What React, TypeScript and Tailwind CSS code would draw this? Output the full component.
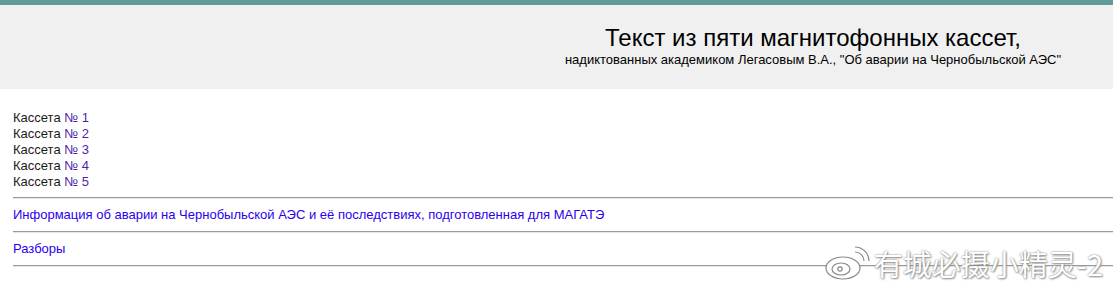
const CASSETTES = [1, 2, 3, 4, 5]

function Rule() {
  return <div className="h-[2px] border-t border-t-[#9a9a9a] border-b border-b-[#e6e6e6]" />
}

export default function App() {
  return (
    <div className="relative h-[289px] overflow-hidden bg-white font-['Liberation_Sans',Arial,sans-serif] text-[13px] leading-4 text-[#1a1a1a]">
      <div className="h-[5px] bg-[#5f9b9a]" />
      {/* Header */}
      <div className="flex h-[84px] justify-end bg-[#f0f0f0]">
        <div className="w-[600px] pt-[19px] text-center">
          <h1 className="text-[24px] leading-7 text-black">Текст из пяти магнитофонных кассет,</h1>
          <p className="text-[13px] leading-4 text-black">
            надиктованных академиком Легасовым В.А., "Об аварии на Чернобыльской АЭС"
          </p>
        </div>
      </div>

      <div className="pl-[13px] pt-[21px]">
        <ul>
          {CASSETTES.map((n) => (
            <li key={n}>
              Кассета <a href="#" className="text-[#4f1fa6]">№ {n}</a>
            </li>
          ))}
        </ul>
        <div className="mt-[7px]">
          <Rule />
        </div>
        <div className="py-[8px]">
          <a href="#" className="text-[#2a00f0]">
            Информация об аварии на Чернобыльской АЭС и её последствиях, подготовленная для МАГАТЭ
          </a>
        </div>
        <Rule />
        <div className="py-[8px]">
          <a href="#" className="text-[#2a00f0]">Разборы</a>
        </div>
        <Rule />
      </div>

      {/* watermark */}
      <div className="absolute right-[10px] top-[245px] flex items-center gap-[4px] text-[29px] leading-8 text-white [text-shadow:0_0_2px_#777,1px_1px_2px_#999] font-['Noto_Sans_CJK_SC',sans-serif]">
        <svg width="46" height="36" viewBox="0 0 46 36" fill="white" stroke="#888" strokeWidth="1.2">
          <ellipse cx="19" cy="23" rx="17" ry="11" />
          <ellipse cx="17" cy="24" rx="9" ry="6" />
          <circle cx="16" cy="24" r="2.2" />
          <path d="M31 7a9 9 0 0 1 9 9" fill="none" />
          <path d="M31 2a14 14 0 0 1 14 14" fill="none" />
        </svg>
        <span>有城必摄小精灵-2</span>
      </div>
    </div>
  )
}
